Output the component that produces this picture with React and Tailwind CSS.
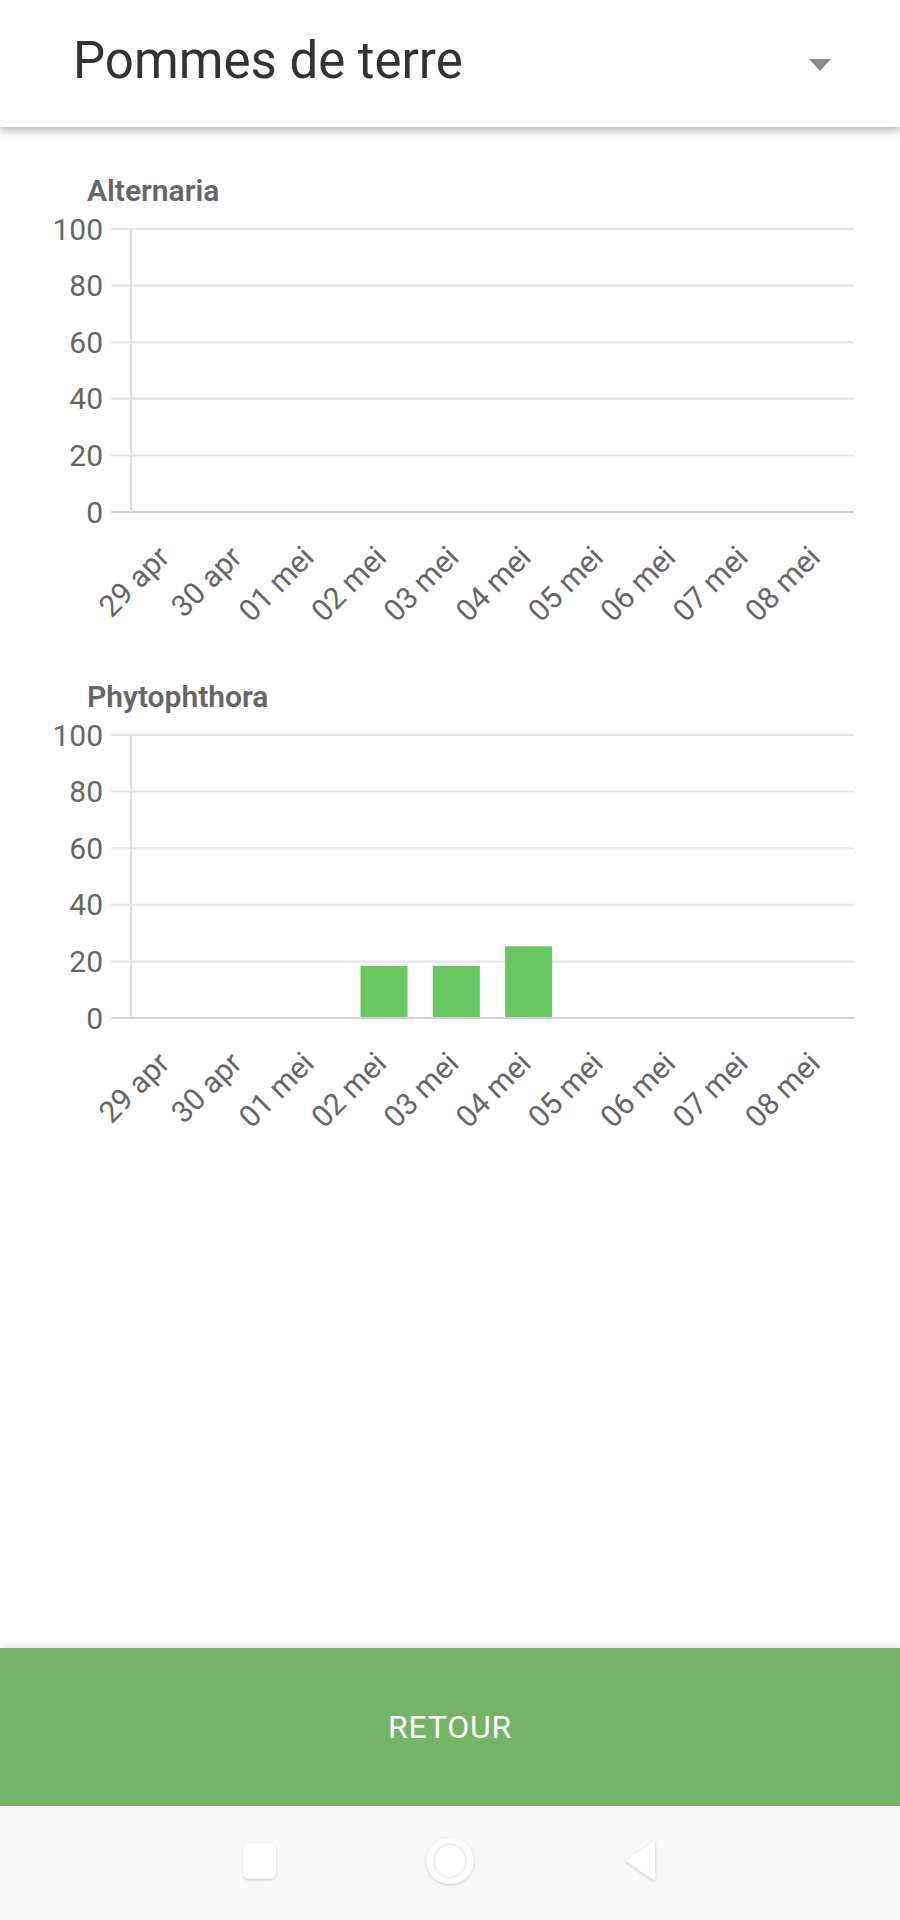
import React from 'react';

const days = ['29 apr', '30 apr', '01 mei', '02 mei', '03 mei', '04 mei', '05 mei', '06 mei', '07 mei', '08 mei'];

const charts = [
  { title: 'Alternaria', values: [0, 0, 0, 0, 0, 0, 0, 0, 0, 0] },
  { title: 'Phytophthora', values: [0, 0, 0, 18, 18, 25, 0, 0, 0, 0] },
];

// plot geometry (svg coordinates)
const left = 131;
const right = 854;
const top = 20;
const plotH = 283;
const zero = top + plotH;
const band = (right - left) / days.length;
const barW = 47;

function BarChart({ title, values }) {
  return (
    <div className="flex flex-col">
      <div className="pl-[87px] h-[36px] text-[30px] leading-[36px] font-semibold text-[#666]">{title}</div>
      <svg width="900" height="420" className="block" style={{ fontFamily: 'Roboto, sans-serif' }}>
        {[100, 80, 60, 40, 20, 0].map((v) => {
          const y = zero - (v / 100) * plotH;
          return (
            <g key={v}>
              <line x1="111" x2={right} y1={y} y2={y} stroke={v === 0 ? '#d2d2d2' : '#e6e6e6'} strokeWidth="2" />
              <text x="103" y={y} textAnchor="end" dominantBaseline="central" fontSize="30" fill="#666">
                {v}
              </text>
            </g>
          );
        })}
        <line x1={left} x2={left} y1={top} y2={zero} stroke="#dedede" strokeWidth="2" />
        {values.map((v, i) => {
          if (!v) return null;
          const cx = left + band * (i + 0.5);
          const h = (v / 100) * plotH;
          return <rect key={i} x={cx - barW / 2} y={zero - h - 1} width={barW} height={h} fill="#67c862" />;
        })}
        {days.map((d, i) => {
          const cx = left + band * (i + 0.5) + 4;
          const y = zero + 47;
          return (
            <text key={d} x={cx} y={y} textAnchor="end" fontSize="30" fill="#666" transform={`rotate(-45 ${cx} ${y})`}>
              {d}
            </text>
          );
        })}
      </svg>
    </div>
  );
}

export default function App() {
  return (
    <div className="h-[1920px] flex flex-col bg-white" style={{ fontFamily: 'Roboto, sans-serif' }}>
      <header className="relative z-10 h-[127px] shrink-0 bg-white flex items-center justify-between pl-[73px] pr-[69px] shadow-[0_4px_8px_rgba(0,0,0,0.28)]">
        <h1 className="text-[51px] leading-none text-[#333] -mt-[6px]">Pommes de terre</h1>
        <svg width="22" height="12" viewBox="0 0 22 12" className="mt-[2px]">
          <polygon points="0,0 22,0 11,12" fill="#8c8c8c" />
        </svg>
      </header>

      <main className="flex-1 flex flex-col gap-[50px] pt-[46px]">
        {charts.map((c) => (
          <BarChart key={c.title} title={c.title} values={c.values} />
        ))}
      </main>

      <button className="h-[158px] shrink-0 bg-[#74b467] text-white text-[32px] tracking-wide shadow-[0_-3px_8px_rgba(0,0,0,0.10)]">
        RETOUR
      </button>

      <nav className="h-[114px] shrink-0 bg-[#f8f8f8] flex items-center justify-center gap-[150px] pb-[4px]">
        <div className="w-[33px] h-[36px] rounded-[6px] bg-white shadow-[0_1px_3px_rgba(0,0,0,0.18)]" />
        <div className="w-[48px] h-[46px] rounded-full bg-white shadow-[0_1px_3px_rgba(0,0,0,0.18)] flex items-center justify-center">
          <div className="w-[30px] h-[32px] rounded-full bg-white shadow-[0_0_3px_rgba(0,0,0,0.25)]" />
        </div>
        <svg width="34" height="42" viewBox="0 0 34 42" style={{ filter: 'drop-shadow(0 1px 1.5px rgba(0,0,0,0.2))' }}>
          <path d="M31 3 L31 39 Q31 41 29 40 L3 22 Q1 21 3 19 L29 2 Q31 1 31 3 Z" fill="#fff" />
        </svg>
      </nav>
    </div>
  );
}
